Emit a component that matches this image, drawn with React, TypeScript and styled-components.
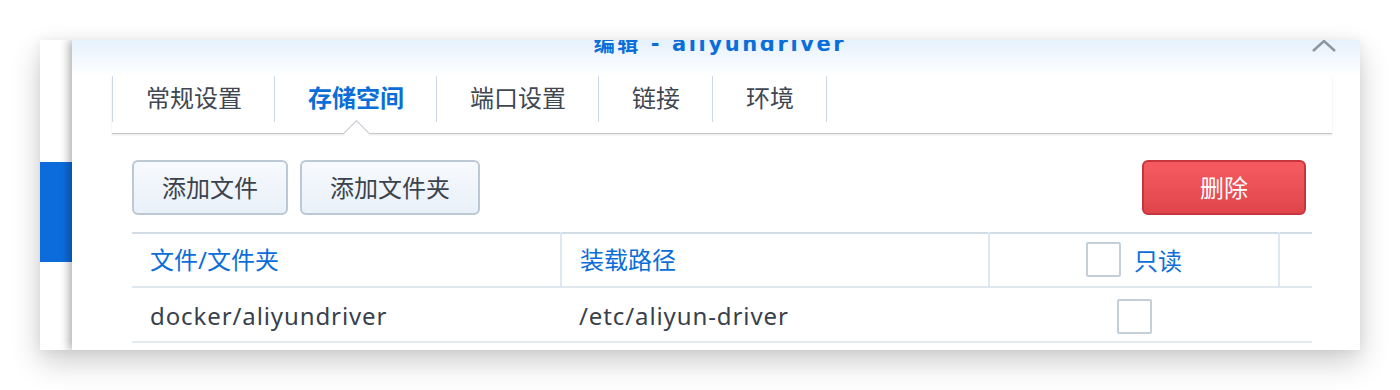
import styled, { createGlobalStyle } from "styled-components";

const GlobalStyle = createGlobalStyle`
  html, body {
    margin: 0;
    background: #ffffff;
  }
  body {
    font-family: "Noto Sans", "Noto Sans CJK SC", sans-serif;
  }
`;

const Page = styled.div`
  padding: 40px;
  width: 1400px;
  height: 390px;
  box-sizing: border-box;
`;

const Frame = styled.div`
  display: flex;
  width: 1320px;
  height: 310px;
  overflow: hidden;
  background: #ffffff;
  box-shadow: 0 12px 28px rgba(0, 0, 0, 0.2), 0 0 10px rgba(0, 0, 0, 0.06);
`;

const BackWindow = styled.div`
  width: 32px;
  flex: none;
  background: #ffffff;
`;

const NavHighlight = styled.div`
  margin-top: 122px;
  height: 100px;
  background: #0d6cdc;
`;

const Dialog = styled.div`
  flex: 1;
  position: relative;
  z-index: 1;
  display: flex;
  flex-direction: column;
  background: linear-gradient(#e5f1fd 0px, #ffffff 36px);
  box-shadow: -3px 0 9px rgba(0, 0, 0, 0.32);
`;

const Header = styled.div`
  height: 36px;
  padding: 0 24px;
  display: grid;
  grid-template-columns: 1fr auto 1fr;
  align-items: start;
`;

const Title = styled.div`
  grid-column: 2;
  margin-top: -8px;
  padding-left: 8px;
  font-family: "DejaVu Sans", "Noto Sans CJK SC", sans-serif;
  font-size: 21px;
  font-weight: 700;
  line-height: 24px;
  letter-spacing: 2.6px;
  color: #0b6ed8;
`;

const CloseButton = styled.div`
  grid-column: 3;
  justify-self: end;
  width: 24px;
  height: 12px;
  display: flex;
`;

const Body = styled.div`
  padding: 0 28px 0 40px;
  display: flex;
  flex-direction: column;
`;

const TabBar = styled.div`
  display: flex;
  padding-bottom: 11px;
  border-bottom: 1px solid #c4c8cd;
  box-shadow: 0 1px 2px rgba(0, 0, 0, 0.1);
`;

const Tab = styled.div<{ $active?: boolean }>`
  position: relative;
  height: 46px;
  box-sizing: border-box;
  padding: 0 32px 5px 33px;
  display: flex;
  align-items: center;
  border-left: 1px solid #ccd8e4;
  font-size: 24px;
  font-weight: ${(p) => (p.$active ? 600 : 400)};
  color: ${(p) => (p.$active ? "#0b6ed8" : "#3f4852")};

  &:last-child {
    border-right: 1px solid #ccd8e4;
  }

  ${(p) =>
    p.$active &&
    `
    &::after {
      content: "";
      position: absolute;
      left: 50%;
      bottom: -21px;
      width: 18px;
      height: 18px;
      margin-left: -9px;
      background: #ffffff;
      border-top: 1px solid #c4c8cd;
      border-left: 1px solid #c4c8cd;
      transform: rotate(45deg);
    }
  `}
`;

const Content = styled.div`
  padding: 0 20px;
`;

const Toolbar = styled.div`
  margin-top: 26px;
  display: flex;
  align-items: center;
  gap: 12px;
`;

const Spacer = styled.div`
  flex: 1;
`;

const Button = styled.button<{ $danger?: boolean }>`
  height: 55px;
  min-width: ${(p) => (p.$danger ? "164px" : "0")};
  padding: 0 28px;
  margin-right: ${(p) => (p.$danger ? "6px" : "0")};
  border-radius: 6px;
  border: 2px solid ${(p) => (p.$danger ? "#c8363d" : "#bcc8d4")};
  background: ${(p) =>
    p.$danger
      ? "linear-gradient(#f65b61, #e0454c)"
      : "linear-gradient(#f7fafe, #e9f0f8)"};
  color: ${(p) => (p.$danger ? "#ffffff" : "#3a434d")};
  font-family: "Noto Sans", "Noto Sans CJK SC", sans-serif;
  font-size: 24px;
  line-height: 1;
`;

const Table = styled.table`
  margin-top: 17px;
  width: 100%;
  border-collapse: collapse;
  table-layout: fixed;
  border-top: 2px solid #d2dce7;
`;

const HeadCell = styled.th<{ $center?: boolean; $last?: boolean }>`
  height: 49px;
  padding: 0 18px 3px;
  text-align: ${(p) => (p.$center ? "center" : "left")};
  font-size: 24px;
  font-weight: 400;
  color: #0b6ed8;
  border-bottom: 2px solid #dfe7ef;
  border-right: ${(p) => (p.$last ? "none" : "2px solid #dfe7f0")};
`;

const Cell = styled.td<{ $center?: boolean }>`
  height: 51px;
  padding: 2px 18px 0;
  text-align: ${(p) => (p.$center ? "center" : "left")};
  font-size: 24px;
  letter-spacing: 0.9px;
  color: #38414b;
  border-bottom: 2px solid #e3eaf2;
`;

const CheckLabel = styled.span`
  display: inline-flex;
  align-items: center;
  gap: 13px;
  vertical-align: middle;
`;

const CheckBox = styled.span`
  display: inline-block;
  width: 35px;
  height: 35px;
  box-sizing: border-box;
  border: 2px solid #c4cfda;
  border-radius: 2px;
  background: #ffffff;
  vertical-align: middle;
`;

const tabs = ["常规设置", "存储空间", "端口设置", "链接", "环境"];

const App = () => {
  return (
    <Page>
      <GlobalStyle />
      <Frame>
        <BackWindow>
          <NavHighlight />
        </BackWindow>
        <Dialog>
          <Header>
            <Title>编辑 - aliyundriver</Title>
            <CloseButton>
              <svg width="24" height="12" viewBox="0 0 24 12">
                <path d="M1 11 L12 1 L23 11" fill="none" stroke="#8c949d" strokeWidth="2.4" />
              </svg>
            </CloseButton>
          </Header>
          <Body>
            <TabBar>
              {tabs.map((t) => (
                <Tab key={t} $active={t === "存储空间"}>
                  {t}
                </Tab>
              ))}
            </TabBar>
            <Content>
              <Toolbar>
                <Button>添加文件</Button>
                <Button>添加文件夹</Button>
                <Spacer />
                <Button $danger>删除</Button>
              </Toolbar>
              <Table>
                <colgroup>
                  <col style={{ width: 429 }} />
                  <col style={{ width: 428 }} />
                  <col style={{ width: 290 }} />
                  <col />
                </colgroup>
                <thead>
                  <tr>
                    <HeadCell>文件/文件夹</HeadCell>
                    <HeadCell>装载路径</HeadCell>
                    <HeadCell $center>
                      <CheckLabel>
                        <CheckBox />
                        只读
                      </CheckLabel>
                    </HeadCell>
                    <HeadCell $last />
                  </tr>
                </thead>
                <tbody>
                  <tr>
                    <Cell>docker/aliyundriver</Cell>
                    <Cell>/etc/aliyun-driver</Cell>
                    <Cell $center>
                      <CheckBox />
                    </Cell>
                    <Cell />
                  </tr>
                </tbody>
              </Table>
            </Content>
          </Body>
        </Dialog>
      </Frame>
    </Page>
  );
};

export default App;
